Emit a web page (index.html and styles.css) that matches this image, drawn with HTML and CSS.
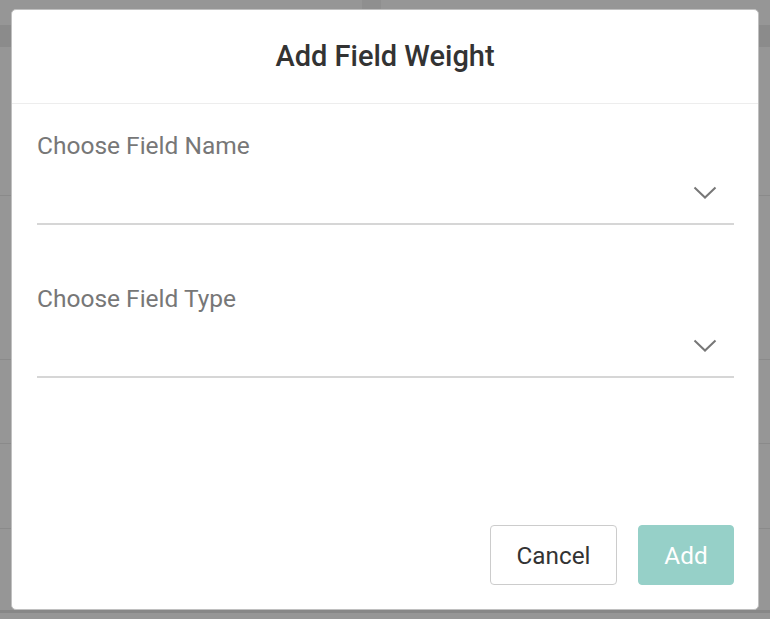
FILE: index.html
```html
<!DOCTYPE html>
<html lang="en">
<head>
<meta charset="utf-8">
<title>Add Field Weight</title>
<link rel="stylesheet" href="styles.css">
</head>
<body>
<div class="modal">
  <div class="modal-header">
    <h2 class="title">Add Field Weight</h2>
  </div>
  <div class="modal-body">
    <div class="field">
      <label class="field-label">Choose Field Name</label>
      <div class="select">
        <svg class="chev" width="24" height="13" viewBox="0 0 24 13"><polyline points="1.5,1.5 12,11.5 22.5,1.5" fill="none" stroke="#777" stroke-width="2"/></svg>
      </div>
    </div>
    <div class="field">
      <label class="field-label">Choose Field Type</label>
      <div class="select">
        <svg class="chev" width="24" height="13" viewBox="0 0 24 13"><polyline points="1.5,1.5 12,11.5 22.5,1.5" fill="none" stroke="#777" stroke-width="2"/></svg>
      </div>
    </div>
  </div>
  <div class="modal-footer">
    <button class="btn btn-cancel">Cancel</button>
    <button class="btn btn-add">Add</button>
  </div>
</div>
</body>
</html>
```
FILE: styles.css
```css
html, body {
  margin: 0;
  height: 100%;
}
body {
  box-sizing: border-box;
  padding: 9px 11px 0 11px;
  font-family: Roboto, "Liberation Sans", sans-serif;
  background:
    linear-gradient(#8b8b8b, #8b8b8b) 0 25px / 100% 22px no-repeat,
    linear-gradient(#8f8f8f, #8f8f8f) 362px 0 / 19px 25px no-repeat,
    linear-gradient(#8a8a8a, #8a8a8a) 0 195px / 100% 1px no-repeat,
    linear-gradient(#8a8a8a, #8a8a8a) 0 359px / 100% 1px no-repeat,
    linear-gradient(#8a8a8a, #8a8a8a) 0 443px / 100% 1px no-repeat,
    linear-gradient(#8a8a8a, #8a8a8a) 0 528px / 100% 1px no-repeat,
    linear-gradient(#878787, #878787) 0 610px / 100% 3px no-repeat,
    #969696;
}
.modal {
  width: 748px;
  height: 601px;
  box-sizing: border-box;
  border: 1px solid #c0c0c0;
  border-radius: 5px;
  background: #fff;
  display: flex;
  flex-direction: column;
}
.modal-header {
  height: 93px;
  border-bottom: 1px solid #ededed;
  display: flex;
  align-items: center;
  justify-content: center;
}
.title {
  margin: 0;
  font-size: 29px;
  line-height: 33px;
  font-weight: 500;
  color: #333;
}
.modal-body {
  padding: 28px 24px 0 25px;
}
.field + .field {
  margin-top: 60px;
}
.field-label {
  display: block;
  font-size: 24.5px;
  line-height: 28px;
  color: #777;
}
.select {
  height: 63px;
  border-bottom: 2px solid #d6d6d6;
  display: flex;
  align-items: center;
  justify-content: flex-end;
  padding-right: 17px;
}
.chev {
  display: block;
  margin-top: 2px;
}
.modal-footer {
  margin-top: auto;
  padding: 0 24px 24px 25px;
  display: flex;
  justify-content: flex-end;
  gap: 21px;
}
.btn {
  height: 60px;
  box-sizing: border-box;
  border-radius: 4px;
  font-family: Roboto, "Liberation Sans", sans-serif;
  font-size: 24.3px;
  padding: 0;
  cursor: pointer;
}
.btn-cancel {
  width: 127px;
  background: #fff;
  border: 1px solid #cccccc;
  color: #333;
}
.btn-add {
  width: 96px;
  background: #96d0c8;
  border: 1px solid #96d0c8;
  color: #fff;
}
```
